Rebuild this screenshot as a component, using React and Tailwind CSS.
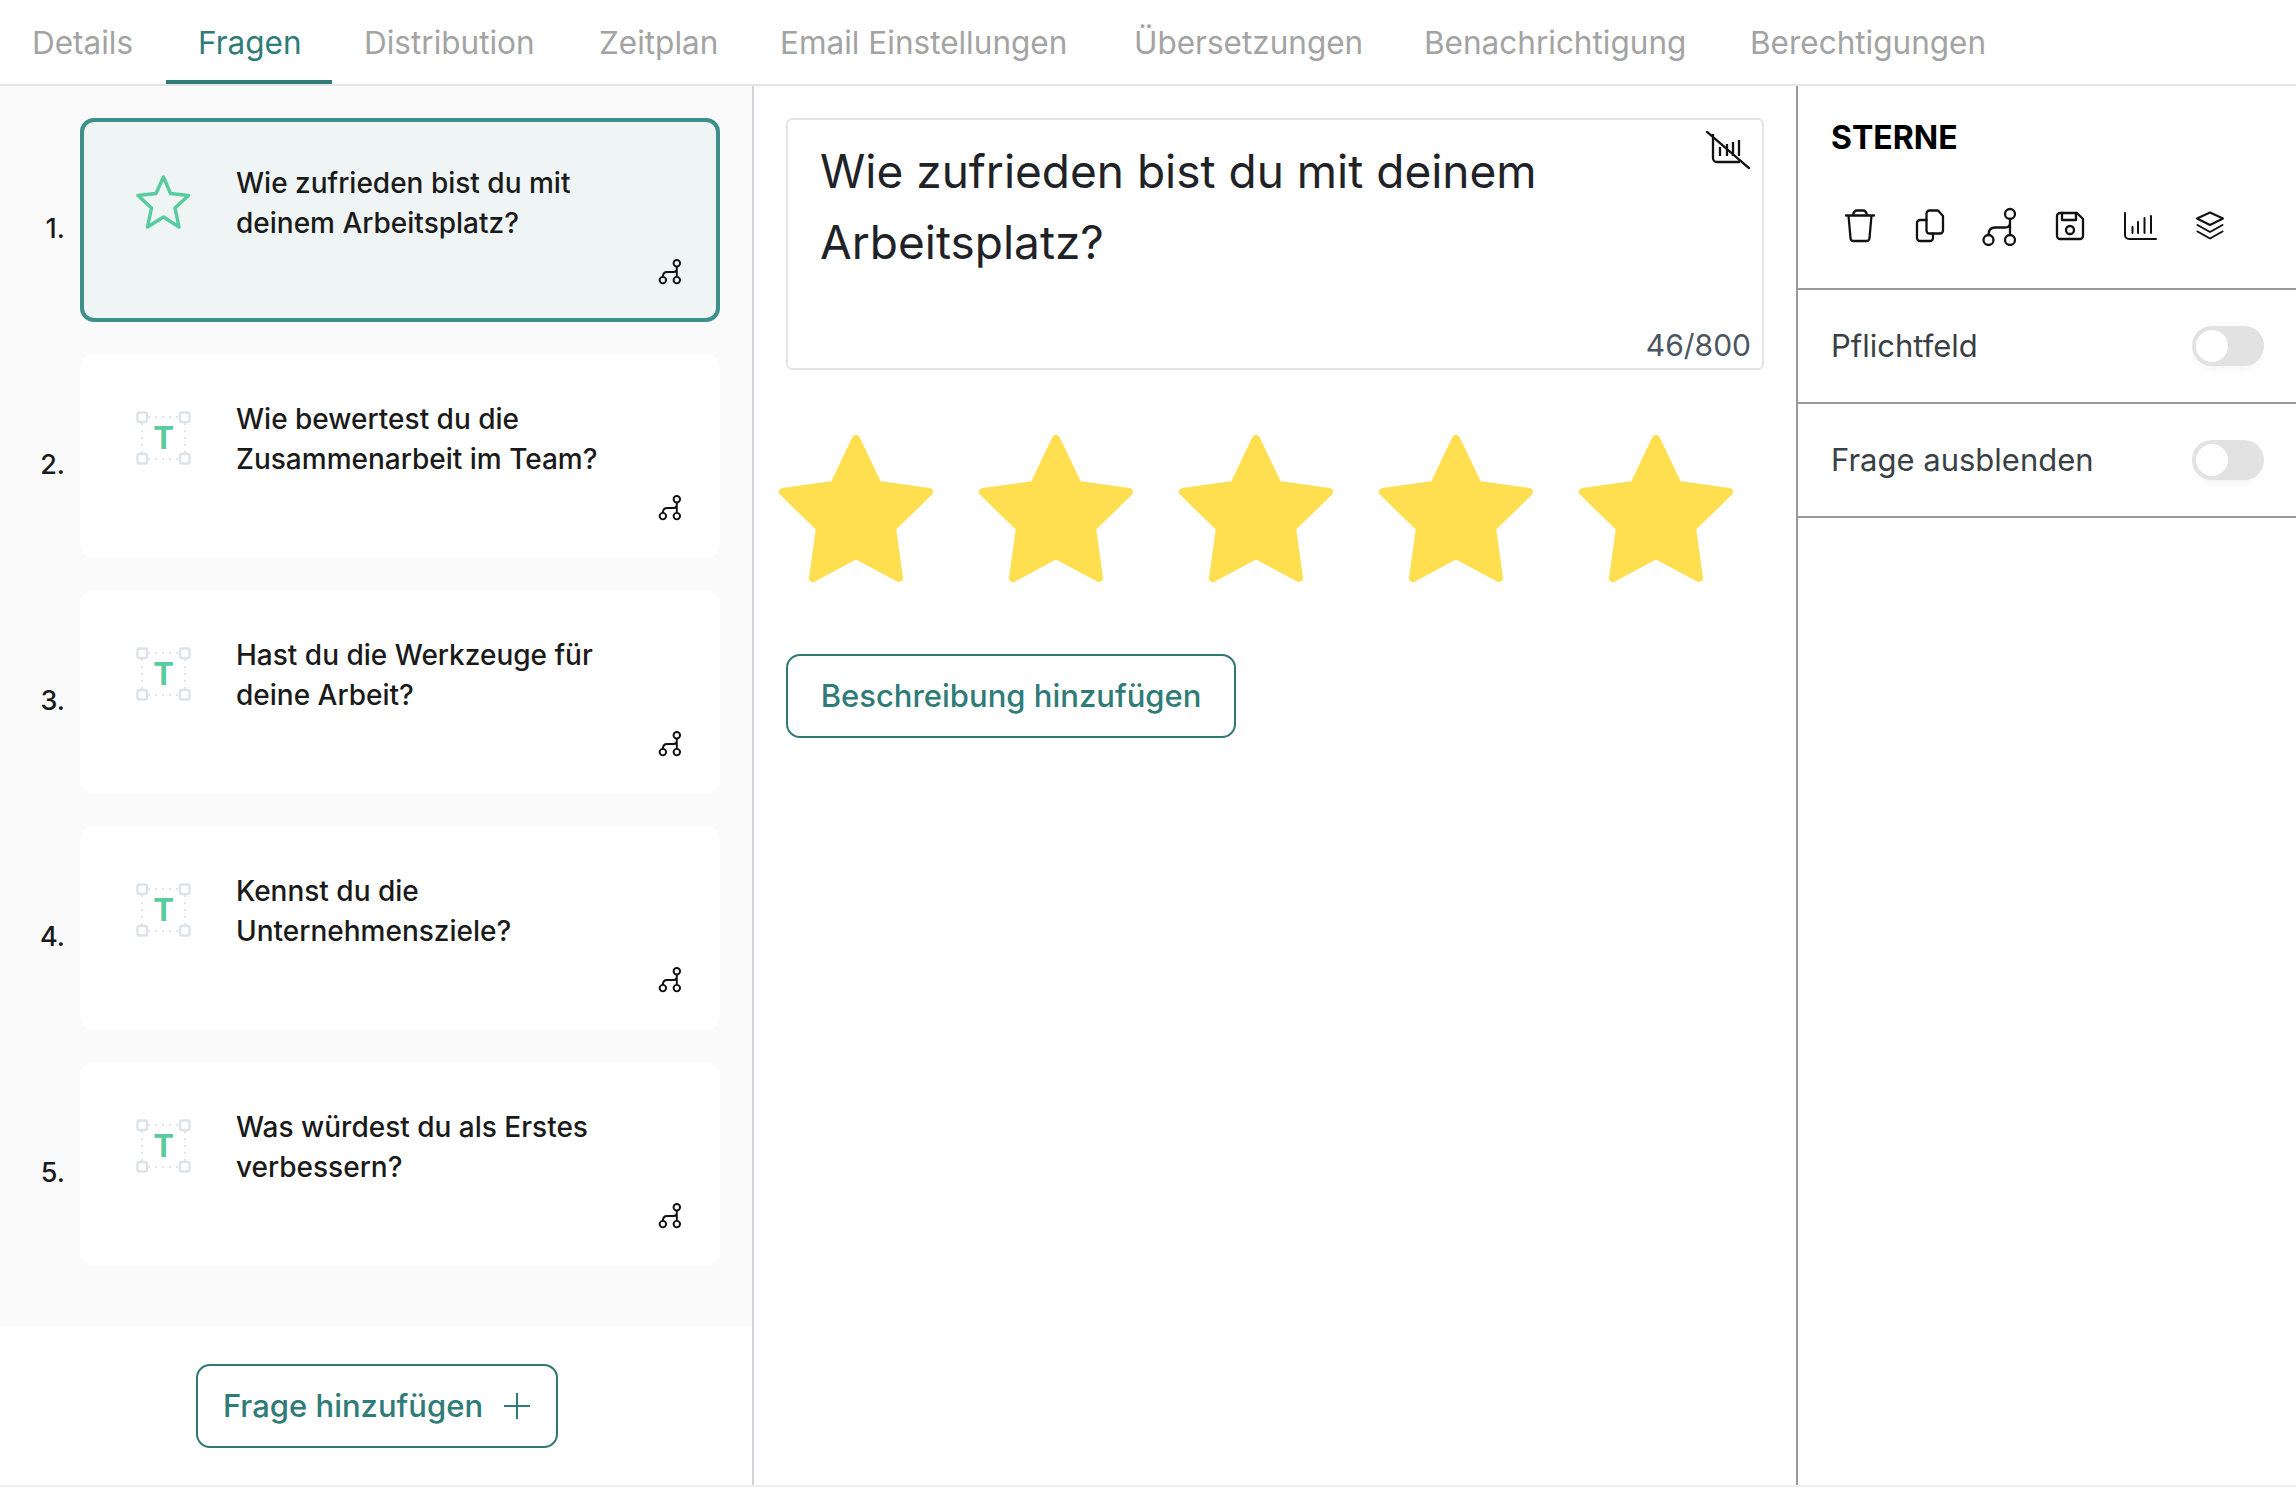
const tabs = [
  ['Details', 'w-[166px]'],
  ['Fragen', 'w-[166px]'],
  ['Distribution', 'w-[235px]'],
  ['Zeitplan', 'w-[181px]'],
  ['Email Einstellungen', 'w-[354px]'],
  ['Übersetzungen', 'w-[290px]'],
  ['Benachrichtigung', 'w-[326px]'],
  ['Berechtigungen', 'w-[290px]'],
];

const questions = [
  { id: 1, icon: 'star', lines: ['Wie zufrieden bist du mit', 'deinem Arbeitsplatz?'] },
  { id: 2, icon: 'text', lines: ['Wie bewertest du die', 'Zusammenarbeit im Team?'] },
  { id: 3, icon: 'text', lines: ['Hast du die Werkzeuge für', 'deine Arbeit?'] },
  { id: 4, icon: 'text', lines: ['Kennst du die', 'Unternehmensziele?'] },
  { id: 5, icon: 'text', lines: ['Was würdest du als Erstes', 'verbessern?'] },
];

function BranchPaths() {
  return (
    <>
      <circle cx="30" cy="8" r="5" />
      <circle cx="30" cy="34" r="5" />
      <circle cx="8.5" cy="34" r="5" />
      <path d="M30 13V29M8.5 29C8.5 24 11 21.500 15 21.500H25C28 21.500 30 20 30 17" />
    </>
  );
}

function IconBase({ children, width = 2.3 }) {
  return (
    <svg width="40" height="40" viewBox="0 0 40 40" fill="none" stroke="#111" strokeWidth={width} strokeLinecap="round" strokeLinejoin="round">
      {children}
    </svg>
  );
}

function ActionIcons() {
  return (
    <div className="flex gap-[30px] mt-[48px] h-[40px] pl-[9px]">
      <IconBase>
        <path d="M6 9.500H34M8.500 9.500L10.500 32A3 3 0 0 0 13.500 35H26.500A3 3 0 0 0 29.500 32L31.500 9.500M13 9.500C13.500 6 15 4.500 17 4.500H23C25 4.500 26.500 6 27 9.500" />
      </IconBase>
      <IconBase>
        <path d="M16.500 14H10A3 3 0 0 0 7 17V32A3 3 0 0 0 10 35H20A3 3 0 0 0 23 32V27.500" />
        <path d="M19.500 4.500H28L33 10V24.500A3 3 0 0 1 30 27.500H19.500A3 3 0 0 1 16.500 24.500V7.500A3 3 0 0 1 19.500 4.500Z" />
      </IconBase>
      <IconBase>
        <BranchPaths />
      </IconBase>
      <IconBase>
        <path d="M10 7H27L33 13V30A3 3 0 0 1 30 33H10A3 3 0 0 1 7 30V10A3 3 0 0 1 10 7Z" />
        <path d="M12 7V14H26V7" />
        <circle cx="20" cy="24" r="4" />
      </IconBase>
      <IconBase width={2}>
        <path d="M5 7V29A4 4 0 0 0 9 33H36M12.500 21V27M18 16V27M24.500 12V27M31 10V27" />
      </IconBase>
      <IconBase width={2}>
        <path d="M20 6.500L33 12.500L20 19L7 12.500Z" />
        <path d="M7.500 19L20 26L32.500 19M7.500 25.500L20 32.500L32.500 25.500" />
      </IconBase>
    </div>
  );
}

function TextIcon() {
  return (
    <svg width="55" height="54" viewBox="0 0 55 54" fill="none">
      <path d="M12 6H44M6 12V42M49 12V42M12 48H44" stroke="#dfe4e9" strokeWidth="2" strokeDasharray="2 5" />
      <g fill="#fff" stroke="#dde3ea" strokeWidth="2.500">
        <rect x="1.500" y="1.500" width="9.500" height="9.500" rx="2" />
        <rect x="44" y="1.500" width="9.500" height="9.500" rx="2" />
        <rect x="1.500" y="43" width="9.500" height="9.500" rx="2" />
        <rect x="44" y="43" width="9.500" height="9.500" rx="2" />
      </g>
      <text x="27.500" y="38" textAnchor="middle" fontFamily="Inter, sans-serif" fontWeight="700" fontSize="31" fill="#58cb9f">T</text>
    </svg>
  );
}

function StarOutline() {
  return (
    <svg width="55" height="54" viewBox="0 0 55 54" fill="none" stroke="#58cb9f" strokeWidth="3.500" strokeLinejoin="round">
      <path d="M27.500 2L34.500 18.500L52.500 20.500L39 33L43 52L27.500 42L11.500 52L15.500 33L2 20.500L20 18.500Z" />
    </svg>
  );
}

function BigStar() {
  return (
    <svg width="200" height="150" viewBox="0 0 200 150" fill="#ffde50" stroke="#ffde50" strokeWidth="8" strokeLinejoin="round">
      <path d="M100 4L122 50L173 57L136 93L143 143L100 120L57 143L64 93L27 57L78 50Z" />
    </svg>
  );
}

function Toggle() {
  return (
    <div className="w-[72px] h-[40px] rounded-full bg-[#e2e2e2] p-[4px] shadow-[0_8px_10px_-6px_rgba(0,0,0,0.06)]">
      <div className="w-[32px] h-[32px] rounded-full bg-white" />
    </div>
  );
}

function QuestionCard({ q, active }) {
  return (
    <div className="flex items-center">
      <div className="w-[65px] pt-[16px] text-right text-[27px] font-medium leading-none text-[#1a1a1a]">{q.id}.</div>
      <div
        className={`relative ml-[15px] w-[640px] h-[204px] rounded-[14px] flex ${
          active ? 'bg-[#eff4f4] border-4 border-[#3d8f8c] pl-[52px] pt-[53px]' : 'bg-white pl-[56px] pt-[57px]'
        }`}
      >
        <div className="w-[55px] shrink-0">{q.icon === 'star' ? <StarOutline /> : <TextIcon />}</div>
        <div className="ml-[45px] mt-[-12px] text-[28px] leading-[40px] font-medium text-[#1a1a1a]">
          {q.lines.map(line => (
            <div key={line}>{line}</div>
          ))}
        </div>
        <svg
          className={`absolute ${active ? 'right-[34px] bottom-[32px]' : 'right-[38px] bottom-[36px]'}`}
          width="24"
          height="28"
          viewBox="1 1 37 41"
          fill="none"
          stroke="#111"
          strokeWidth="3"
        >
          <BranchPaths />
        </svg>
      </div>
    </div>
  );
}

export default function App() {
  return (
    <div className="w-[2296px] h-[1500px] bg-white font-[Inter,sans-serif] flex flex-col">
      <div className="h-[86px] shrink-0 flex border-b-2 border-[#e5e5e5]">
        {tabs.map(([label, width]) => (
          <div
            key={label}
            className={`${width} h-[84px] pl-[32px] pt-[23px] text-[31.5px] leading-[40px] whitespace-nowrap ${
              label === 'Fragen' ? 'border-b-4 border-[#2f7b78] text-[#2f7b78]' : 'text-[#a3a3a3]'
            }`}
          >
            {label}
          </div>
        ))}
      </div>

      <div className="h-[1401px] shrink-0 flex border-b-2 border-[#eeeeee]">
        <div className="w-[754px] shrink-0 flex flex-col border-r-2 border-[#d1d5db]">
          <div className="bg-[#fafafa] pt-[32px] pb-[60px] flex flex-col gap-[32px]">
            {questions.map(q => (
              <QuestionCard key={q.id} q={q} active={q.id === 1} />
            ))}
          </div>
          <div className="flex-1 flex items-start justify-center pt-[38px] pl-[2px]">
            <button className="w-[362px] h-[84px] rounded-[14px] border-2 border-[#2f7873] flex items-center justify-center gap-[20px] text-[31px] font-medium text-[#2f7b78]">
              Frage hinzufügen
              <svg width="28" height="28" viewBox="0 0 28 28" stroke="#2f7b78" strokeWidth="2">
                <path d="M14 1V27M1 14H27" />
              </svg>
            </button>
          </div>
        </div>

        <div className="flex-1 pt-[32px] px-[32px] border-r-2 border-[#9a9a9a]">
          <div className="relative w-[978px] h-[252px] rounded-[6px] border-2 border-[#e2e6ea] pl-[32px] pt-[16px]">
            <div className="text-[46px] leading-[71px] text-[#1f2328]">
              <div>Wie zufrieden bist du mit deinem</div>
              <div>Arbeitsplatz?</div>
            </div>
            <svg className="absolute right-[12px] top-[11px]" width="44" height="38" viewBox="0 0 44 38" fill="none" stroke="#111" strokeWidth="2.300">
              <path d="M7 3V27A4 4 0 0 0 11 31H34M14 16V25M21 13V25M27 11V25M33 9V25M0 0L44 38" />
            </svg>
            <div className="absolute right-[11px] bottom-[3px] text-[30px] leading-[40px] text-[#4b5563]">46/800</div>
          </div>

          <div className="flex mt-[65px] ml-[-30px]">
            {[1, 2, 3, 4, 5].map(n => (
              <BigStar key={n} />
            ))}
          </div>

          <button className="mt-[69px] w-[450px] h-[84px] rounded-[14px] border-2 border-[#2f7873] text-[31px] font-medium text-[#2f7b78]">
            Beschreibung hinzufügen
          </button>
        </div>

        <div className="w-[498px] shrink-0 flex flex-col">
          <div className="h-[204px] border-b-2 border-[#9a9a9a] pl-[33px] pt-[32px]">
            <div className="text-[32px] leading-[40px] font-bold text-black">STERNE</div>
            <ActionIcons />
          </div>
          <div className="h-[114px] border-b-2 border-[#9a9a9a] pl-[33px] pr-[32px] flex items-center justify-between text-[31px] text-[#3a3f45]">
            Pflichtfeld
            <Toggle />
          </div>
          <div className="h-[114px] border-b-2 border-[#9a9a9a] pl-[33px] pr-[32px] flex items-center justify-between text-[31px] text-[#3a3f45]">
            Frage ausblenden
            <Toggle />
          </div>
        </div>
      </div>
    </div>
  );
}
